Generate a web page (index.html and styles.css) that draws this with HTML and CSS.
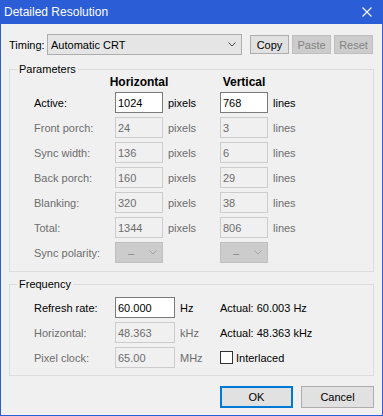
FILE: index.html
```html
<!DOCTYPE html>
<html>
<head>
<meta charset="utf-8">
<link rel="stylesheet" href="styles.css">
</head>
<body>
<div class="window">
  <div class="titlebar">
    <span class="title">Detailed Resolution</span>
    <svg class="close" width="10" height="10" viewBox="0 0 10 10"><path d="M0.5 0.5 L9.5 9.5 M9.5 0.5 L0.5 9.5" stroke="#fff" stroke-width="1.1" fill="none"/></svg>
  </div>
  <div class="content">
    <div class="timing-row">
      <span class="timing-label">Timing:</span>
      <div class="combo"><span>Automatic CRT</span><svg class="chev" width="8" height="5" viewBox="0 0 8 5"><polyline points="0.5,0.5 4,4 7.5,0.5" fill="none" stroke="#444" stroke-width="1"/></svg></div>
      <div class="tbtns">
        <div class="btn">Copy</div>
        <div class="btn disabled">Paste</div>
        <div class="btn disabled">Reset</div>
      </div>
    </div>

    <fieldset class="group params">
      <legend>Parameters</legend>
      <div class="pgrid">
        <div></div><div class="hdr">Horizontal</div><div></div><div class="hdr">Vertical</div><div></div>

        <div class="lbl">Active:</div><div class="field on">1024</div><div class="unit">pixels</div><div class="field on">768</div><div class="unit">lines</div>

        <div class="lbl off">Front porch:</div><div class="field">24</div><div class="unit off">pixels</div><div class="field">3</div><div class="unit off">lines</div>

        <div class="lbl off">Sync width:</div><div class="field">136</div><div class="unit off">pixels</div><div class="field">6</div><div class="unit off">lines</div>

        <div class="lbl off">Back porch:</div><div class="field">160</div><div class="unit off">pixels</div><div class="field">29</div><div class="unit off">lines</div>

        <div class="lbl off">Blanking:</div><div class="field">320</div><div class="unit off">pixels</div><div class="field">38</div><div class="unit off">lines</div>

        <div class="lbl off">Total:</div><div class="field">1344</div><div class="unit off">pixels</div><div class="field">806</div><div class="unit off">lines</div>

        <div class="lbl off">Sync polarity:</div>
        <div class="dcombo"><span>–</span><svg class="chev" width="8" height="5" viewBox="0 0 8 5"><polyline points="0.5,0.5 4,4 7.5,0.5" fill="none" stroke="#a6a6a6" stroke-width="1"/></svg></div>
        <div></div>
        <div class="dcombo"><span>–</span><svg class="chev" width="8" height="5" viewBox="0 0 8 5"><polyline points="0.5,0.5 4,4 7.5,0.5" fill="none" stroke="#a6a6a6" stroke-width="1"/></svg></div>
        <div></div>
      </div>
    </fieldset>

    <fieldset class="group freq">
      <legend>Frequency</legend>
      <div class="fgrid">
        <div class="lbl">Refresh rate:</div><div class="field on">60.000</div><div class="unit">Hz</div><div class="actual">Actual: 60.003 Hz</div>
        <div class="lbl off">Horizontal:</div><div class="field">48.363</div><div class="unit off">kHz</div><div class="actual">Actual: 48.363 kHz</div>
        <div class="lbl off">Pixel clock:</div><div class="field">65.00</div><div class="unit off">MHz</div><div class="check-row"><span class="checkbox"></span><span>Interlaced</span></div>
      </div>
    </fieldset>

    <div class="actions">
      <div class="btn big default">OK</div>
      <div class="btn big">Cancel</div>
    </div>
  </div>
</div>
</body>
</html>
```
FILE: styles.css
```css
* { box-sizing: border-box; margin: 0; padding: 0; }
html, body { width: 383px; height: 416px; overflow: hidden; background: #f0f0f0; }
body { font-family: "Liberation Sans", Arial, sans-serif; font-size: 11px; color: #000; }

.window {
  width: 383px; height: 416px;
  border: 1px solid #2b5dd6; border-top: 0;
  display: flex; flex-direction: column;
  background: #f0f0f0;
}
.titlebar {
  height: 24px; margin: 0 -1px;
  background: #2b5dd6; color: #fff;
  display: flex; align-items: center; justify-content: space-between;
  padding-left: 4px; padding-right: 11px;
}
.title { font-size: 12px; }
.close { display: block; }

.content {
  flex: 1;
  padding: 10px 8px 7px 8px;
  display: flex; flex-direction: column;
}

.timing-row { display: flex; align-items: center; height: 21px; }
.timing-label { width: 38px; }
.combo {
  width: 195px; height: 21px;
  border: 1px solid #adadad; background: #e5e5e5;
  display: flex; align-items: center; justify-content: space-between;
  padding-left: 3px; padding-right: 5px;
}
.chev { display: block; }
.tbtns { margin-left: 8px; display: flex; gap: 3px; }
.btn {
  width: 39px; height: 19px;
  border: 1px solid #adadad; background: #e1e1e1;
  display: flex; align-items: center; justify-content: center;
  color: #000;
}
.btn.disabled { background: #cccccc; border-color: #bfbfbf; color: #838383; }

.group {
  border: 1px solid #dcdcdc;
  padding: 0;
}
.group legend {
  line-height: 12px;
  padding: 0 2px;
  margin-left: 7px;
}
.params { margin-top: 8px; }
.freq { margin-top: 6px; }

.pgrid {
  display: grid;
  grid-template-columns: 81px 48px 57px 48px 1fr;
  grid-template-rows: 13px repeat(7, 21px);
  row-gap: 4px;
  align-items: center;
  padding: 0 0 8px 24px;
}
.hdr { font-weight: bold; font-size: 12px; justify-self: center; white-space: nowrap; }
.lbl { white-space: nowrap; }
.off { color: #6d6d6d; }
.unit { padding-left: 5px; white-space: nowrap; }

.field {
  height: 21px;
  border: 1px solid #cccccc; background: #f0f0f0; color: #6d6d6d;
  padding-left: 2px;
  display: flex; align-items: center;
}
.field.on { background: #fff; border-color: #7a7a7a; color: #000; }

.dcombo {
  height: 21px;
  border: 1px solid #bfbfbf; background: #cccccc; color: #838383;
  display: flex; align-items: center; justify-content: space-between;
  padding-left: 12px; padding-right: 5px;
}

.fgrid {
  display: grid;
  grid-template-columns: 81px 60px 45px 1fr;
  grid-template-rows: repeat(3, 21px);
  row-gap: 4px;
  align-items: center;
  padding: 7px 0 7px 24px;
}
.actual { white-space: nowrap; }
.check-row { display: flex; align-items: center; gap: 3px; }
.checkbox { width: 13px; height: 13px; border: 1px solid #333; background: #fff; display: block; }

.actions {
  margin-top: auto;
  display: flex; justify-content: flex-end; gap: 8px;
}
.btn.big { width: 73px; height: 22px; }
.btn.default { border: 2px solid #0078d7; }
```
